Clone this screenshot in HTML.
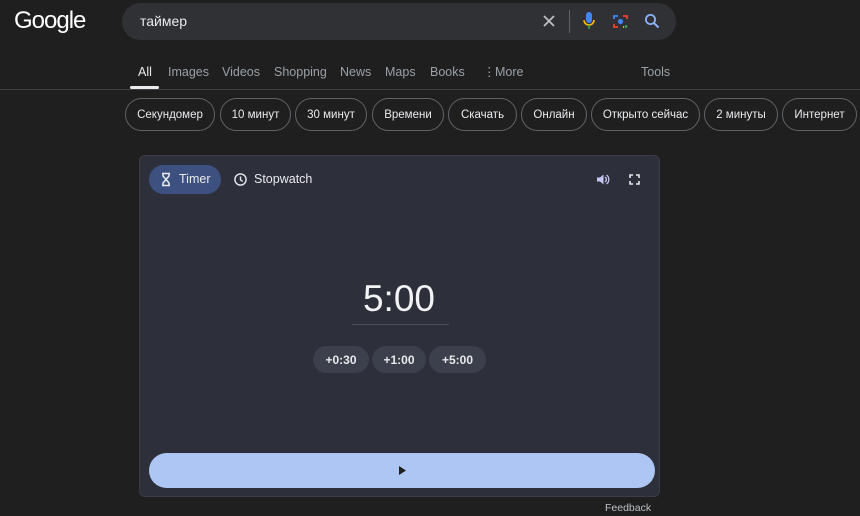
<!DOCTYPE html>
<html><head><meta charset="utf-8"><style>
*{box-sizing:border-box;margin:0;padding:0}
body{width:860px;height:516px;background:#1f1f1f;font-family:"Liberation Sans",Arial,sans-serif;color:#e8eaed;position:relative;overflow:hidden}
.abs{position:absolute}
.logo{left:14px;top:7px;font-size:24px;color:#fff;letter-spacing:-1px}
.search{left:122px;top:3px;width:554px;height:37px;background:#303134;border-radius:19px}
.q{left:140px;top:13px;font-size:14px;color:#e8eaed}
.tab{top:65px;font-size:12.5px;color:#9aa0a6}
.line{left:0;top:89px;width:860px;height:1px;background:#3c4043}
.chip{top:98px;height:33px;border:1px solid #5f6368;border-radius:17px;font-size:11.5px;color:#e8eaed;display:flex;align-items:center;justify-content:center}
.card{left:139px;top:155px;width:521px;height:342px;background:#2d2f3b;border:1px solid #3a3c47;border-radius:6px}
.btn{top:346px;height:27px;background:#3c3f4c;border-radius:14px;font-size:12px;font-weight:bold;color:#e8eaed;display:flex;align-items:center;justify-content:center}
</style></head><body>
<div class="abs logo">Google</div>
<div class="abs search"></div>
<div class="abs q">таймер</div>
<svg class="abs" style="left:542px;top:14px" width="14" height="14"><path d="M2 2L12 12M12 2L2 12" stroke="#bdc1c6" stroke-width="1.8"/></svg>
<div class="abs" style="left:569px;top:10px;width:1px;height:23px;background:#5f6368"></div>
<svg class="abs" style="left:582px;top:11px" width="14" height="20"><rect x="4" y="1" width="6" height="11" rx="3" fill="#4285f4"/><path d="M2 9a5 5 0 0 0 10 0" stroke="#fbbc04" stroke-width="1.6" fill="none"/><path d="M7 14v4" stroke="#34a853" stroke-width="1.6"/><path d="M2 9v0.5" stroke="#ea4335" stroke-width="1.6"/></svg>
<svg class="abs" style="left:612px;top:13px" width="17" height="17"><path d="M2 6V3h4" stroke="#4285f4" stroke-width="1.8" fill="none"/><path d="M11 3h4v3" stroke="#ea4335" stroke-width="1.8" fill="none"/><path d="M2 11v3h4" stroke="#ea4335" stroke-width="1.8" fill="none"/><path d="M11 14h1" stroke="#fbbc04" stroke-width="1.8"/><circle cx="8.5" cy="8.5" r="2.6" fill="#4285f4"/><circle cx="14" cy="13.5" r="1.4" fill="#34a853"/></svg>
<svg class="abs" style="left:644px;top:13px" width="16" height="16"><circle cx="6.5" cy="6.5" r="4.6" stroke="#8ab4f8" stroke-width="1.8" fill="none"/><path d="M10 10l4.5 4.5" stroke="#8ab4f8" stroke-width="2"/></svg>
<div class="abs tab" style="left:138px;color:#e8eaed">All</div>
<div class="abs" style="left:130px;top:86px;width:29px;height:3px;background:#e8eaed;border-radius:2px"></div>
<div class="abs tab" style="left:168px">Images</div>
<div class="abs tab" style="left:222px">Videos</div>
<div class="abs tab" style="left:274px">Shopping</div>
<div class="abs tab" style="left:340px">News</div>
<div class="abs tab" style="left:385px">Maps</div>
<div class="abs tab" style="left:430px">Books</div>
<div class="abs tab" style="left:483px;top:64px">⋮</div>
<div class="abs tab" style="left:495px">More</div>
<div class="abs tab" style="left:641px">Tools</div>
<div class="abs line"></div>
<div class="abs chip" style="left:125px;width:90px">Секундомер</div>
<div class="abs chip" style="left:220px;width:71px">10 минут</div>
<div class="abs chip" style="left:295px;width:72px">30 минут</div>
<div class="abs chip" style="left:372px;width:72px">Времени</div>
<div class="abs chip" style="left:448px;width:69px">Скачать</div>
<div class="abs chip" style="left:521px;width:66px">Онлайн</div>
<div class="abs chip" style="left:591px;width:109px">Открыто сейчас</div>
<div class="abs chip" style="left:704px;width:74px">2 минуты</div>
<div class="abs chip" style="left:782px;width:75px">Интернет</div>
<div class="abs card"></div>
<div class="abs" style="left:149px;top:165px;width:72px;height:29px;background:#3c5180;border-radius:15px"></div>
<svg class="abs" style="left:160px;top:172px" width="12" height="15"><path d="M2 1.5h8M2 13.5h8M3 1.5v2.5l3 3.5-3 3.5v2.5M9 1.5v2.5L6 7.5l3 3.5v2.5" stroke="#e8eaed" stroke-width="1.5" fill="none"/></svg>
<div class="abs" style="left:179px;top:172px;font-size:12.5px">Timer</div>
<svg class="abs" style="left:233px;top:172px" width="15" height="15"><circle cx="7.5" cy="7.5" r="5.6" stroke="#e8eaed" stroke-width="1.4" fill="none"/><path d="M7.5 4.5v3.3l2.2 1.6" stroke="#e8eaed" stroke-width="1.4" fill="none"/></svg>
<div class="abs" style="left:254px;top:172px;font-size:12.5px">Stopwatch</div>
<svg class="abs" style="left:596px;top:173px" width="14" height="13"><path d="M1 4.5h3l3.5-3v10l-3.5-3H1z" fill="#c4c7f0"/><path d="M9 4a3 3 0 0 1 0 5M10.5 2a5.5 5.5 0 0 1 0 9" stroke="#c4c7f0" stroke-width="1.3" fill="none"/></svg>
<svg class="abs" style="left:629px;top:174px" width="11" height="11"><path d="M1 4V1h3M7 1h3v3M1 7v3h3M7 10h3V7" stroke="#e8eaed" stroke-width="1.6" fill="none"/></svg>
<div class="abs" style="left:0;width:798px;top:278px;text-align:center;font-size:37px;color:#f1f3f4">5:00</div>
<div class="abs" style="left:352px;top:324px;width:97px;height:1px;background:#4a4d5a"></div>
<div class="abs btn" style="left:313px;width:56px">+0:30</div>
<div class="abs btn" style="left:372px;width:54px">+1:00</div>
<div class="abs btn" style="left:429px;width:57px">+5:00</div>
<div class="abs" style="left:149px;top:453px;width:506px;height:35px;background:#aec6f4;border-radius:18px"></div>
<svg class="abs" style="left:398px;top:465px" width="9" height="11"><path d="M1 1l7 4.5L1 10z" fill="#1f1f1f"/></svg>
<div class="abs" style="left:605px;top:502px;font-size:10.5px;color:#bdc1c6">Feedback</div>
</body></html>
